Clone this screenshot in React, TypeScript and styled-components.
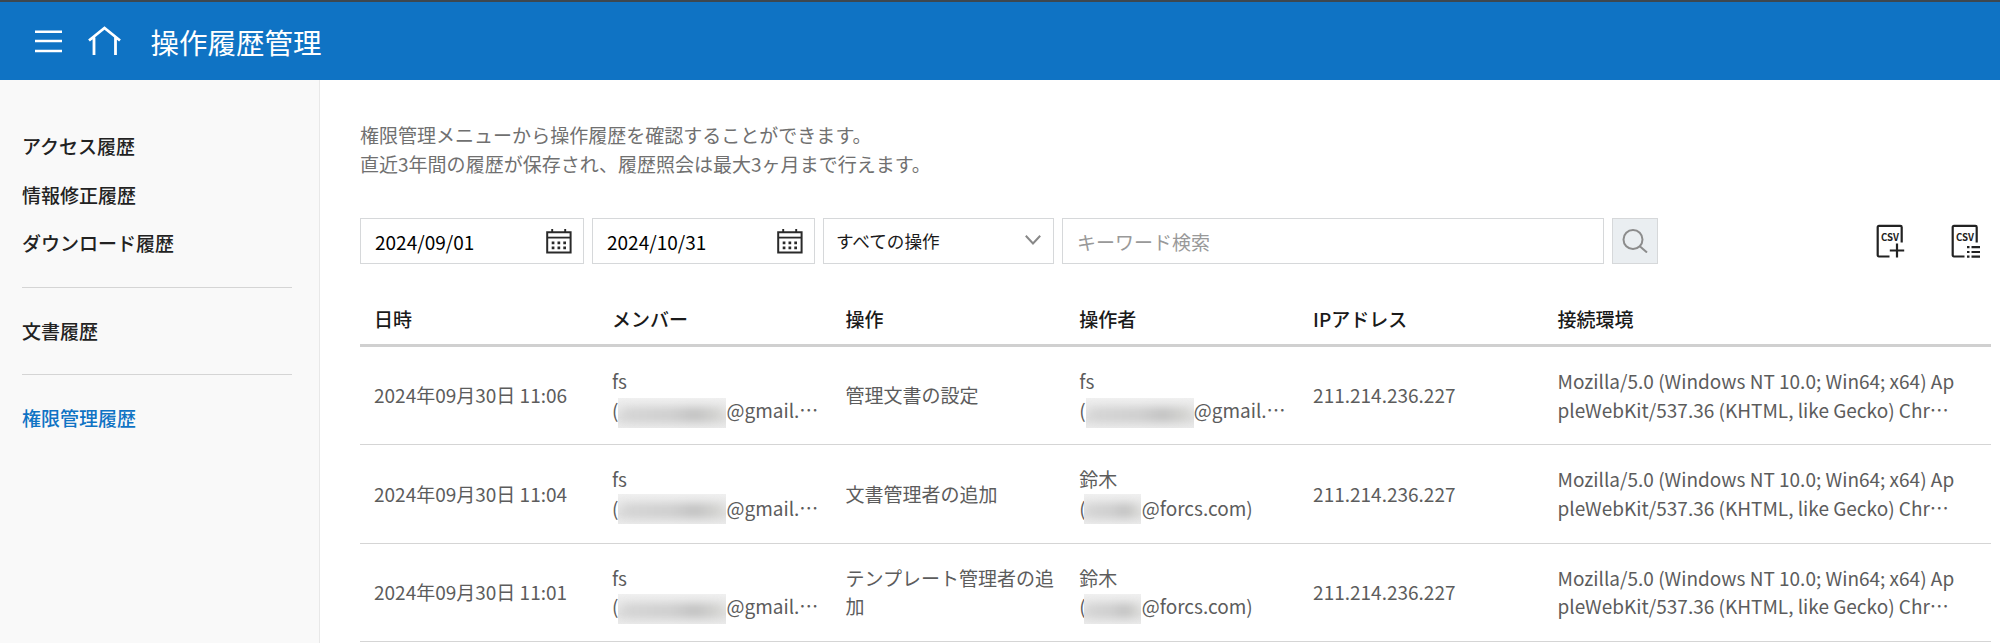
import React from "react";
import styled, { createGlobalStyle, css } from "styled-components";

const GlobalStyle = createGlobalStyle`
  * { box-sizing: border-box; }
  body {
    margin: 0;
    background: #fff;
    overflow: hidden;
    font-family: "Noto Sans CJK JP", sans-serif;
    font-size: 19px;
    color: #5c5c5c;
  }
  h1, p { margin: 0; font-weight: 400; }
`;

const Page = styled.div`
  height: 643px;
  display: flex;
  flex-direction: column;
`;

const Header = styled.header`
  flex: none;
  height: 80px;
  border-top: 2px solid #3d474f;
  background: #0f73c4;
  color: #fff;
  display: flex;
  align-items: center;
  padding-left: 35px;
`;

const HeaderIcon = styled.svg<{ $gap: number }>`
  display: block;
  flex: none;
  margin-right: ${(p) => p.$gap}px;
`;

const Title = styled.h1`
  font-size: 28.5px;
  line-height: 40px;
  padding-top: 1px;
`;

const Body = styled.div`
  flex: 1;
  min-height: 0;
  display: flex;
`;

const Sidebar = styled.nav`
  flex: none;
  width: 320px;
  background: #f9f9f9;
  border-right: 1px solid #e8e8e8;
  padding: 42px 27px 0 22px;
`;

const MenuItem = styled.a<{ $active?: boolean }>`
  display: block;
  height: 48.7px;
  line-height: 48.7px;
  font-weight: 500;
  color: ${(p) => (p.$active ? "#0f73c4" : "#222")};
`;

const Separator = styled.div`
  height: 1px;
  background: #d5d5d5;
  margin: 18.6px 0 19px;
`;

const Main = styled.main`
  flex: 1;
  min-width: 0;
  padding: 41px 9px 0 40px;
`;

const Description = styled.p`
  font-size: 19.03px;
  line-height: 28.5px;
  color: #707070;
`;

const Toolbar = styled.div`
  display: flex;
  align-items: center;
  margin-top: 40px;
  height: 46px;
`;

const field = css`
  height: 46px;
  border: 1px solid #d6d8da;
  background: #fff;
  display: flex;
  align-items: center;
  flex: none;
`;

const Field = styled.div<{ $width: number }>`
  ${field}
  width: ${(p) => p.$width}px;
  margin-right: 8px;
  padding: 0 11px 0 14px;
  justify-content: space-between;
  color: #000;
`;

const SelectField = styled(Field)`
  font-size: 17.6px;
  padding: 0 12px 2px 12px;
  color: #1a1a1a;
`;

const Placeholder = styled.span`
  color: #999;
`;

const SearchButton = styled.button`
  ${field}
  width: 46px;
  padding: 0;
  justify-content: center;
  background: #eaeef1;
`;

const Exports = styled.div`
  margin-left: auto;
  display: flex;
  gap: 45px;
  padding-right: 10px;
`;

const columns = "238px 233.5px 233.8px 233.8px 244.4px 1fr";

const HeadRow = styled.div`
  display: grid;
  grid-template-columns: ${columns};
  align-items: center;
  height: 83px;
  padding-top: 29px;
  border-bottom: 3px solid #d0d0d0;
  font-weight: 500;
  color: #1a1a1a;
`;

const Row = styled.div`
  display: grid;
  grid-template-columns: ${columns};
  align-items: center;
  height: 98.3px;
  border-bottom: 1px solid #d5d5d5;
  line-height: 28.7px;
`;

const Cell = styled.div`
  padding-left: 14px;
  white-space: nowrap;
`;

const Mask = styled.span<{ $width: number; $shift: number; $pull: number }>`
  display: inline-block;
  width: ${(p) => p.$width}px;
  height: 30px;
  margin: -10px ${(p) => p.$pull / 2}px -10px -${(p) => p.$pull}px;
  vertical-align: ${(p) => p.$shift}px;
  overflow: hidden;
  background: linear-gradient(#f0f0f0, #e6e6e6 45%, #e0e0e0 65%, #ebebeb);
`;

const Smudge = styled.span`
  display: block;
  width: 96%;
  height: 13px;
  margin: 10px 2% 0;
  border-radius: 5px;
  background: linear-gradient(90deg, #d4d4d4, #cdcdcd 50%, #bfbfbf 72%, #d8d8d4);
  filter: blur(5px);
`;

const Calendar = () => (
  <svg width="26" height="26" viewBox="0 0 26 26" fill="none" stroke="#2a2a2a">
    <path d="M1.200 4.200H24.600V24.500H1.200Z" strokeWidth="2" />
    <path d="M1.200 9.600H24.600" strokeWidth="1.8" />
    <path d="M6.200 1V5M19.200 1V5" strokeWidth="1.9" />
    <path d="M5.700 14.800H20.200M5.700 19.800H20.200" strokeWidth="2.700" strokeDasharray="2.700 3.100" />
  </svg>
);

const Csv = ({ list }: { list?: boolean }) => (
  <svg width="30" height="34" viewBox="0 0 30 34" fill="none" stroke="#222" strokeWidth="2.2">
    <path d="M13.500 32.500H3Q1.700 32.500 1.700 31V3.200Q1.700 1.900 3 1.900H24.300Q25.700 1.900 25.700 3.200V18.500" />
    <text x="5" y="17" fontSize="10" fontWeight="700" fontFamily="Noto Sans CJK JP" textLength="18" lengthAdjust="spacingAndGlyphs" fill="#222" stroke="none">CSV</text>
    {list ? (
      <path d="M16 23.200H18.500M20.500 23.200H29M16 28H18.500M20.500 28H29M16 32.600H18.500M20.500 32.600H29" />
    ) : (
      <path d="M13.800 26.500H28.200M21 19.500V33.500" />
    )}
  </svg>
);

type Person = { name: string; mask: number; pull: number; suffix: string };
type Entry = { date: string; member: Person; action: string[]; operator: Person; shift: number };

const gmail: Person = { name: "fs", mask: 108, pull: 0, suffix: "@gmail.…" };
const forcs: Person = { name: "鈴木", mask: 57, pull: 2, suffix: "@forcs.com)" };

const entries: Entry[] = [
  { date: "2024年09月30日 11:06", member: gmail, action: ["管理文書の設定"], operator: gmail, shift: 0 },
  { date: "2024年09月30日 11:04", member: gmail, action: ["文書管理者の追加"], operator: forcs, shift: 2 },
  { date: "2024年09月30日 11:01", member: gmail, action: ["テンプレート管理者の追", "加"], operator: forcs, shift: 0 },
];

const PersonCell = ({ person, shift }: { person: Person; shift: number }) => (
  <Cell>
    <div>{person.name}</div>
    <div>
      (<Mask $width={person.mask} $shift={shift} $pull={person.pull}><Smudge /></Mask>{person.suffix}
    </div>
  </Cell>
);

export default function App() {
  return (
    <Page lang="ja">
      <GlobalStyle />
      <Header>
        <HeaderIcon $gap={26} width="27" height="24" viewBox="0 0 27 24" stroke="#fff" strokeWidth="2.6">
          <path d="M0 2.800H27M0 12H27M0 22H27" />
        </HeaderIcon>
        <HeaderIcon $gap={29.5} width="33" height="30" viewBox="0 0 33 30" fill="none" stroke="#fff" strokeWidth="2.8">
          <path d="M1 14.500L16.500 2L32 14.500M6 11.500V29M27.500 11.500V29" />
        </HeaderIcon>
        <Title>操作履歴管理</Title>
      </Header>
      <Body>
        <Sidebar>
          <MenuItem>アクセス履歴</MenuItem>
          <MenuItem>情報修正履歴</MenuItem>
          <MenuItem>ダウンロード履歴</MenuItem>
          <Separator />
          <MenuItem>文書履歴</MenuItem>
          <Separator />
          <MenuItem $active>権限管理履歴</MenuItem>
        </Sidebar>
        <Main>
          <Description>
            権限管理メニューから操作履歴を確認することができます。
            <br />
            直近3年間の履歴が保存され、履歴照会は最大3ヶ月まで行えます。
          </Description>
          <Toolbar>
            <Field $width={224}>2024/09/01<Calendar /></Field>
            <Field $width={223}>2024/10/31<Calendar /></Field>
            <SelectField $width={231}>
              すべての操作
              <svg width="16" height="10" viewBox="0 0 16 10" fill="none" stroke="#888" strokeWidth="2">
                <path d="M0.800 0.800L8 8.500L15.200 0.800" />
              </svg>
            </SelectField>
            <Field $width={542}><Placeholder>キーワード検索</Placeholder></Field>
            <SearchButton aria-label="検索">
              <svg width="26" height="24" viewBox="0 0 26 24" fill="none" stroke="#8c8c8c" strokeWidth="2">
                <circle cx="11" cy="10.500" r="9.500" />
                <path d="M17.500 17L25 23.500" />
              </svg>
            </SearchButton>
            <Exports>
              <Csv />
              <Csv list />
            </Exports>
          </Toolbar>
          <HeadRow>
            <Cell>日時</Cell>
            <Cell>メンバー</Cell>
            <Cell>操作</Cell>
            <Cell>操作者</Cell>
            <Cell>IPアドレス</Cell>
            <Cell>接続環境</Cell>
          </HeadRow>
          {entries.map((e) => (
            <Row key={e.date}>
              <Cell>{e.date}</Cell>
              <PersonCell person={e.member} shift={e.shift} />
              <Cell>{e.action.map((line) => <div key={line}>{line}</div>)}</Cell>
              <PersonCell person={e.operator} shift={e.shift} />
              <Cell>211.214.236.227</Cell>
              <Cell>
                <div>Mozilla/5.0 (Windows NT 10.0; Win64; x64) Ap</div>
                <div>pleWebKit/537.36 (KHTML, like Gecko) Chr…</div>
              </Cell>
            </Row>
          ))}
        </Main>
      </Body>
    </Page>
  );
}
